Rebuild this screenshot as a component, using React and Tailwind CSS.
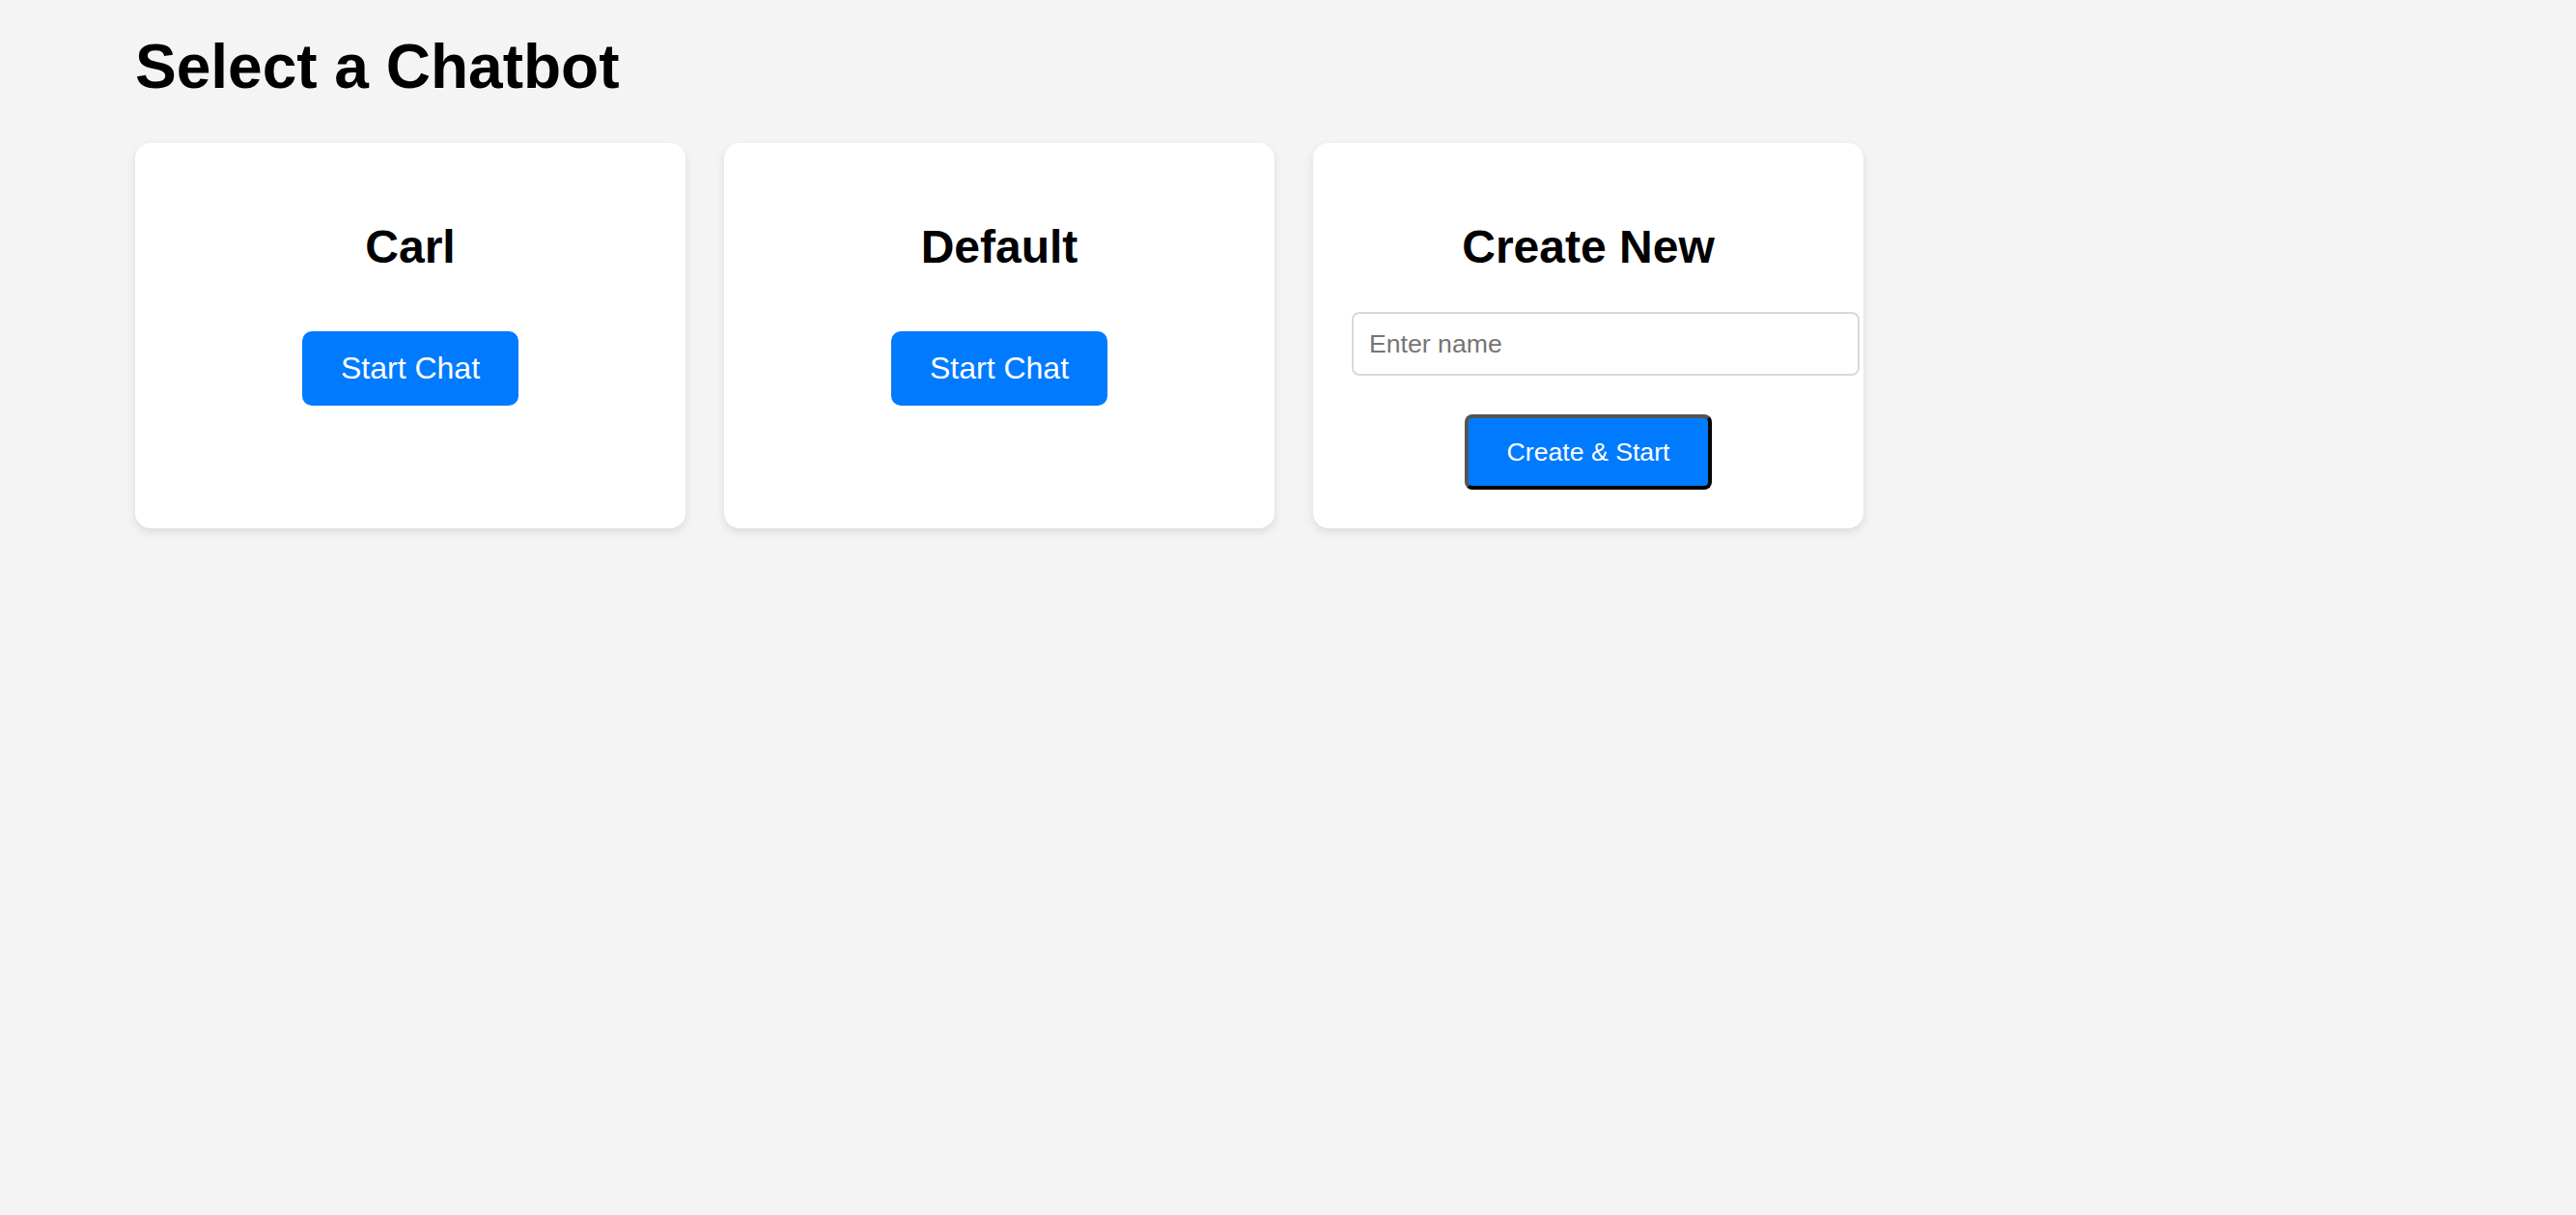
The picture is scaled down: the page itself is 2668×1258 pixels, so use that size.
export default function App() {
    const bots = ['Carl', 'Default'];

    const Card = ({ children }) => (
        <div className="w-[570px] bg-white rounded-[16px] p-[40px] flex flex-col items-center shadow-[0_4px_10px_rgba(0,0,0,0.1)]">
            {children}
        </div>
    );

    return (
        <div className="min-h-screen bg-[#f4f4f4] pl-[140px] pt-[32px] font-['Liberation_Sans',Arial,sans-serif] text-black">
            <h1 className="text-[64px] leading-[74px] font-bold mb-[42px]">Select a Chatbot</h1>

            <div className="flex items-stretch gap-[40px]">
                {bots.map((name) => (
                    <Card key={name}>
                        <h2 className="text-[48px] leading-[55px] font-bold my-[40px]">{name}</h2>
                        <button className="mt-[20px] bg-[#007bff] text-white text-[32px] leading-[37px] px-[40px] py-[20px] rounded-[10px]">
                            Start Chat
                        </button>
                    </Card>
                ))}

                {/* Create new */}
                <Card>
                    <h2 className="text-[48px] leading-[55px] font-bold my-[40px]">Create New</h2>
                    <input
                        type="text"
                        placeholder="Enter name"
                        className="self-start w-[526px] h-[66px] px-[16px] text-[26.67px] border-2 border-[#d9d9d9] rounded-[8px] placeholder:text-[#757575] outline-none mb-[20px]"
                    />
                    <button className="mt-[20px] bg-[#007bff] text-white text-[26.67px] leading-[30px] px-[40px] py-[20px] rounded-[8px] border-4 border-t-[#555] border-l-[#555] border-b-black border-r-black">
                        Create &amp; Start
                    </button>
                </Card>
            </div>
        </div>
    );
}
